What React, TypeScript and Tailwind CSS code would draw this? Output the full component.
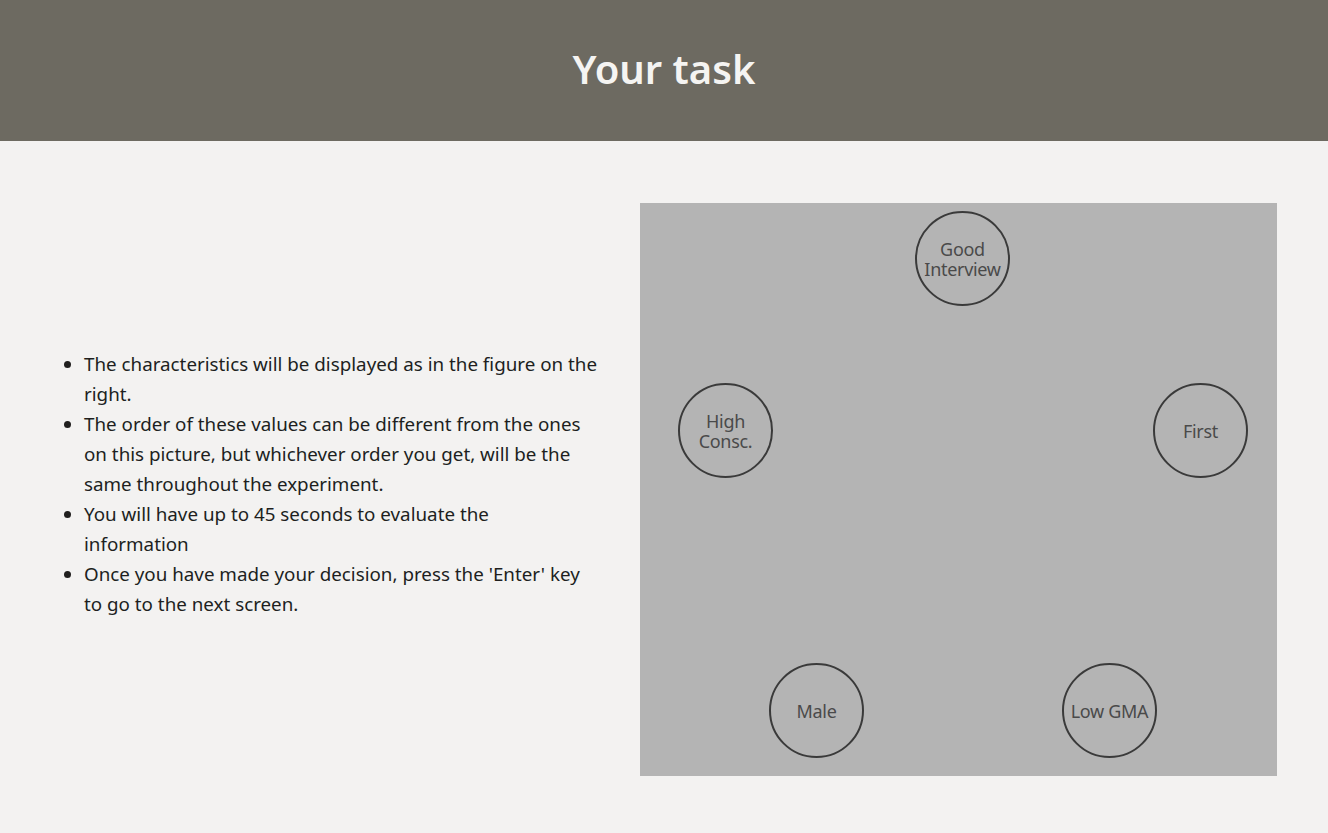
import React from "react";

const nodes = [
  { label: ["Good", "Interview"], x: 322, y: 55 },
  { label: ["High", "Consc."], x: 85, y: 227 },
  { label: ["First"], x: 560, y: 227 },
  { label: ["Male"], x: 176, y: 507 },
  { label: ["Low GMA"], x: 469, y: 507 },
];

function Figure() {
  return (
    <div className="relative w-[637px] h-[573px] shrink-0 bg-[#b4b4b4]">
      {nodes.map((n) => (
        <div
          key={n.label.join(" ")}
          className="absolute w-[95px] h-[95px] -ml-[47px] -mt-[47px] rounded-full border-2 border-[#3a3a3a] flex flex-col items-center justify-center text-[18px] leading-[20px] text-[#4a4a4a] tracking-[-0.3px]"
          style={{ left: n.x, top: n.y }}
        >
          {n.label.map((l) => (
            <span key={l}>{l}</span>
          ))}
        </div>
      ))}
    </div>
  );
}

export default function App() {
  return (
    <div className="min-h-[833px] bg-[#f3f2f1] font-['Noto_Sans','Open_Sans',sans-serif] text-[#201f1e]">
      <header className="h-[141px] bg-[#6d6a61] flex items-center justify-center">
        <h1 className="text-[40px] font-semibold text-[#f5f4f2] mt-[-3px]">Your task</h1>
      </header>
      <main className="flex items-center justify-between pl-[51px] pr-[51px] pt-[62px] pb-[57px]">
        <ul className="list-disc pl-[33px] w-[547px] mb-[12px] text-[18.8px] leading-[30px]">
          <li>The characteristics will be displayed as in the figure on the right.</li>
          <li>
            The order of these values can be different from the ones on this picture, but
            whichever order you get, will be the same throughout the experiment.
          </li>
          <li>You will have up to 45 seconds to evaluate the information</li>
          <li>Once you have made your decision, press the 'Enter' key to go to the next screen.</li>
        </ul>
        <Figure />
      </main>
    </div>
  );
}
